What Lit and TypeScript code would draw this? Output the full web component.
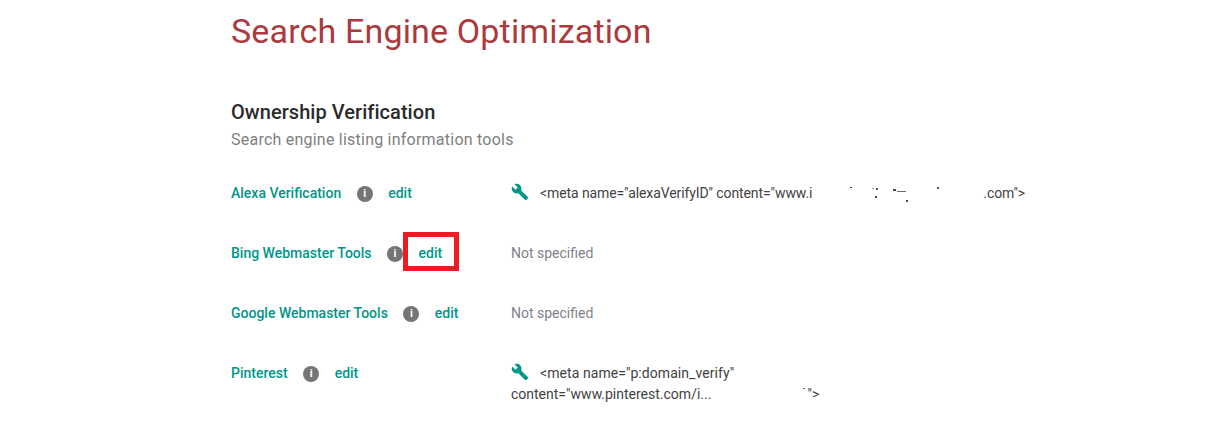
import { LitElement, html, css, svg } from "lit";
import { customElement } from "lit/decorators.js";
import { styleMap } from "lit/directives/style-map.js";

const wrench = svg`<path d="M22.7 19l-9.1-9.1c.9-2.3.4-5-1.5-6.9-2-2-5-2.4-7.4-1.3L9 6 6 9 1.6 4.7C.4 7.1.9 10.1 2.9 12.1c1.9 1.9 4.6 2.4 6.9 1.5l9.1 9.1c.4.4 1 .4 1.4 0l2.3-2.3c.5-.4.5-1.1.1-1.4z"/>`;

type Speck = [number, number, number, number, string];
const alexaSpecks: Speck[] = [
  [339, 14, 2, 1, "#334"], [361, 15, 2, 1, "#c9a040"], [365, 15, 2, 2, "#556"],
  [364, 23, 2, 2, "#445"], [382, 16, 3, 2, "#445"], [386, 18, 9, 1, "#667"],
  [395, 27, 2, 2, "#446"], [426, 14, 2, 2, "#556"],
];
const pinterestSpecks: Speck[] = [[292, 35, 2, 1, "#667"], [213, 27, 2, 1, "#778"]];

@customElement("app-root")
export class AppRoot extends LitElement {
  static styles = css`
    :host { display: block; height: 431px; overflow: hidden; background: #fff; font-family: Roboto, sans-serif; }
    .page { padding: 11px 0 0 231px; }
    h1 { margin: 0; font-size: 34px; line-height: 40px; font-weight: 400; letter-spacing: 0.16px; color: #ab3a3f; }
    h2 { margin: 48px 0 0; font-size: 20px; line-height: 26px; font-weight: 500; letter-spacing: 0.05px; color: #2b2b2b; }
    .sub { margin-top: 3px; font-size: 16px; line-height: 24px; letter-spacing: 0.23px; color: #808080; }
    .rows { margin-top: 21px; }
    .row { display: grid; grid-template-columns: 280px 530px; height: 60px; font-size: 14px; line-height: 21px; }
    .label { display: flex; align-items: flex-start; padding-top: 10px; color: #009688; font-weight: 500; }
    .info { width: 16px; height: 16px; margin: 3px 0 0 15.5px; flex: none; border-radius: 50%; background: #757575; color: #fff; font-size: 11px; line-height: 16px; font-weight: 700; text-align: center; }
    .edit { margin-left: 15.5px; }
    .boxed { position: relative; }
    .boxed::after { content: ""; position: absolute; left: -16px; top: -11px; width: 56px; height: 38.5px; box-sizing: border-box; border: 5px solid #ed1c24; }
    .value { position: relative; padding-top: 10px; color: #424242; }
    .none { color: #7f7f8c; }
    .tool { width: 18px; height: 18px; margin: 0 11px 0 0; fill: #009688; vertical-align: -3px; }
    .tight { letter-spacing: -0.1px; }
    .loose { letter-spacing: 0.07px; }
    .gap { display: inline-block; }
    .g1 { width: 171px; }
    .g2 { width: 96px; }
    .speck { position: absolute; }
  `;

  private specks(list: Speck[]) {
    return list.map(([left, top, width, height, background]) =>
      html`<i class="speck" style=${styleMap({ left: `${left}px`, top: `${top}px`, width: `${width}px`, height: `${height}px`, background })}></i>`);
  }

  private row(name: string, value: unknown, boxed = false) {
    return html`<div class="row">
      <div class="label">
        <span>${name}</span><span class="info">i</span>
        <span class="edit ${boxed ? "boxed" : ""}">edit</span>
      </div>
      <div class="value">${value}</div>
    </div>`;
  }

  render() {
    const tool = html`<svg class="tool" viewBox="0 0 24 24">${wrench}</svg>`;
    const none = html`<span class="none">Not specified</span>`;
    return html`<div class="page">
      <h1>Search Engine Optimization</h1>
      <h2>Ownership Verification</h2>
      <div class="sub">Search engine listing information tools</div>
      <div class="rows">
        ${this.row("Alexa Verification", html`${tool}<span class="tight">&lt;meta name="alexaVerifyID" content="www.i<span class="gap g1"></span>.com"&gt;</span>${this.specks(alexaSpecks)}`)}
        ${this.row("Bing Webmaster Tools", none, true)}
        ${this.row("Google Webmaster Tools", none)}
        ${this.row("Pinterest", html`${tool}<span class="loose">&lt;meta name="p:domain_verify"</span><br /><span>content="www.pinterest.com/i...<span class="gap g2"></span>"&gt;</span>${this.specks(pinterestSpecks)}`)}
      </div>
    </div>`;
  }
}
